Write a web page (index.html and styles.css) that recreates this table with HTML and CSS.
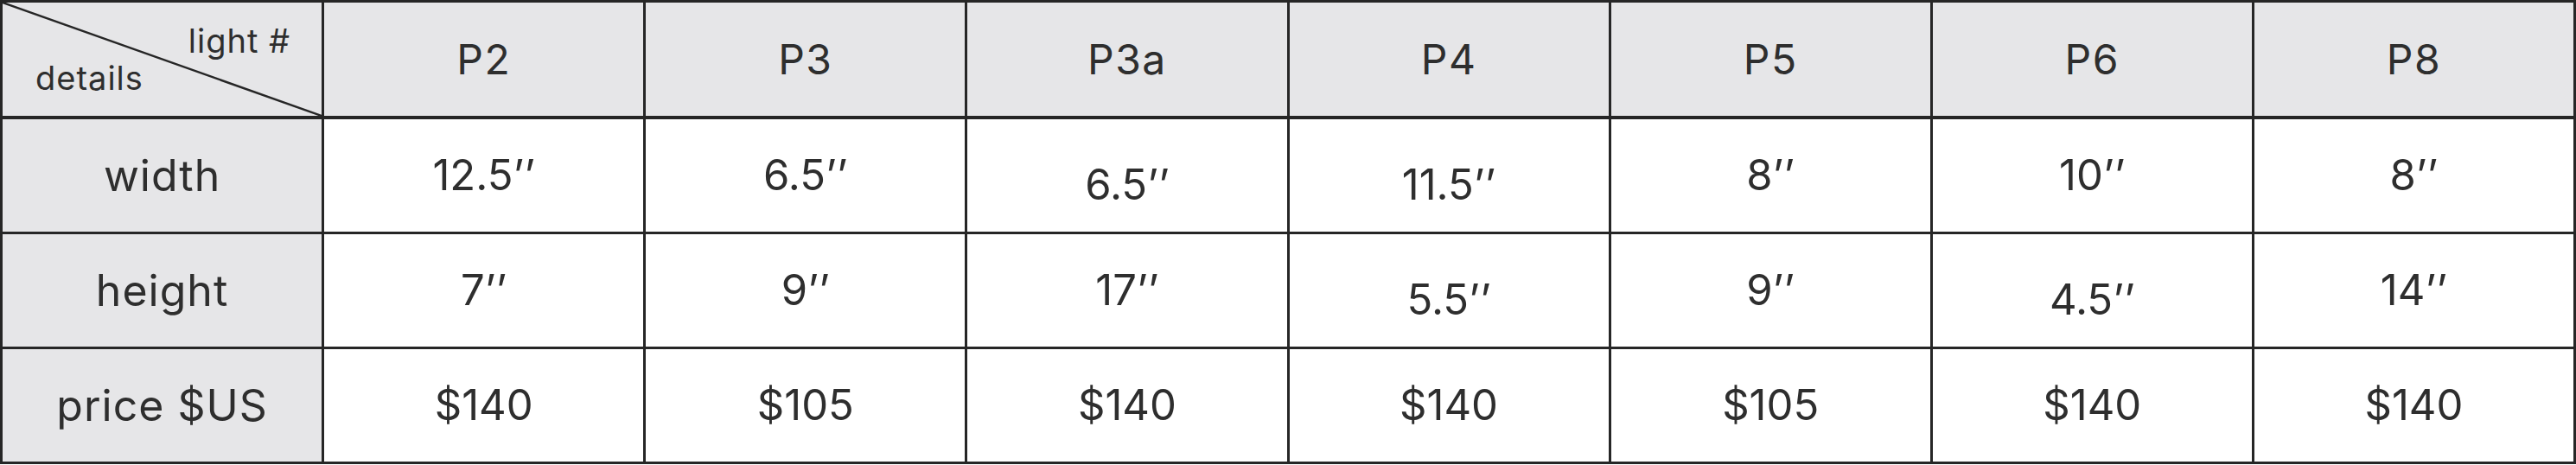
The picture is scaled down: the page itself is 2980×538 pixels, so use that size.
FILE: index.html
```html
<!DOCTYPE html>
<html lang="en">
<head>
<meta charset="utf-8">
<title>Light sizes</title>
<link rel="stylesheet" href="styles.css">
</head>
<body>
<table class="specs">
  <colgroup>
    <col span="8" class="col">
  </colgroup>
  <thead>
    <tr class="head-row">
      <th class="corner">
        <svg class="diag" viewBox="0 0 100 100" preserveAspectRatio="none" aria-hidden="true">
          <line x1="0" y1="0" x2="100" y2="100" vector-effect="non-scaling-stroke"></line>
        </svg>
        <div class="corner-text">
          <span class="corner-top">light #</span>
          <span class="corner-bottom">details</span>
        </div>
      </th>
      <th class="head">P2</th>
      <th class="head">P3</th>
      <th class="head">P3a</th>
      <th class="head">P4</th>
      <th class="head">P5</th>
      <th class="head">P6</th>
      <th class="head">P8</th>
    </tr>
  </thead>
  <tbody>
    <tr>
      <th class="label">width</th>
      <td class="val">12.5’’</td>
      <td class="val">6.5’’</td>
      <td class="val lo">6.5’’</td>
      <td class="val lo">11.5’’</td>
      <td class="val">8’’</td>
      <td class="val">10’’</td>
      <td class="val">8’’</td>
    </tr>
    <tr>
      <th class="label">height</th>
      <td class="val">7’’</td>
      <td class="val">9’’</td>
      <td class="val">17’’</td>
      <td class="val lo">5.5’’</td>
      <td class="val">9’’</td>
      <td class="val lo">4.5’’</td>
      <td class="val">14’’</td>
    </tr>
    <tr>
      <th class="label">price $US</th>
      <td class="val">$140</td>
      <td class="val">$105</td>
      <td class="val">$140</td>
      <td class="val">$140</td>
      <td class="val">$105</td>
      <td class="val">$140</td>
      <td class="val">$140</td>
    </tr>
  </tbody>
</table>
</body>
</html>
```
FILE: styles.css
```css
html, body {
  margin: 0;
  padding: 0;
  background: #ffffff;
}

body {
  font-family: Inter, "Open Sans", "Liberation Sans", sans-serif;
  color: #2e2e2e;
}

.specs {
  width: 2980px;
  table-layout: fixed;
  border-collapse: collapse;
  border: 3px solid #262626;
}

.specs tr {
  height: 133px;
}

.specs .head-row {
  height: 131px;
}

.specs th,
.specs td {
  border: 3px solid #262626;
  padding: 0;
  text-align: center;
  vertical-align: middle;
  font-weight: 400;
}

.head-row th {
  border-bottom-width: 4px;
}

.head,
.corner,
.label {
  background: #e6e6e8;
}

.head {
  font-size: 48px;
  letter-spacing: 1.5px;
  padding-top: 8px;
}

.label {
  font-size: 50px;
  letter-spacing: 1px;
  padding-top: 0;
}

.val {
  font-size: 49px;
  padding-top: 8px;
}

.val.lo {
  padding-top: 22px;
}

.corner {
  position: relative;
  height: 131px;
}

.diag {
  position: absolute;
  left: 0;
  top: 0;
  width: 100%;
  height: 100%;
}

.diag line {
  stroke: #262626;
  stroke-width: 2.5px;
}

.corner-text {
  display: flex;
  flex-direction: column;
  height: 131px;
  box-sizing: border-box;
  padding: 25px 36px 0 38px;
  font-size: 38px;
  letter-spacing: 1px;
  line-height: 1;
}

.corner-top {
  align-self: flex-end;
}

.corner-bottom {
  align-self: flex-start;
  margin-top: 5px;
}
```
